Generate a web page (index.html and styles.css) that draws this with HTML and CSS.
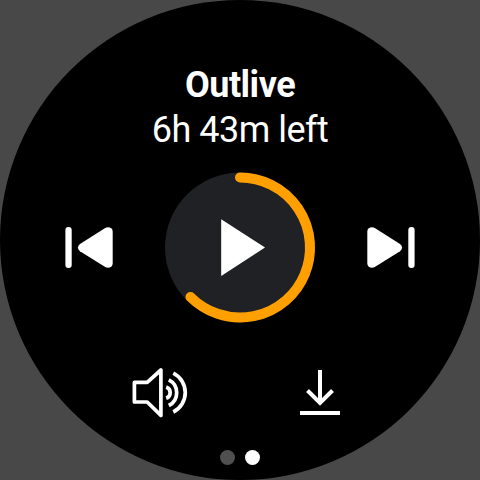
FILE: index.html
```
<!DOCTYPE html>
<html lang="en">
<head>
<meta charset="utf-8">
<title>Player</title>
<link rel="stylesheet" href="styles.css">
</head>
<body>
<main class="watch">
  <header class="info">
    <h1 class="title">Outlive</h1>
    <p class="remaining">6h 43m left</p>
  </header>
  <section class="transport">
    <svg class="skip" viewBox="0 0 48 41">
      <rect x="0.4" y="0.1" width="6.3" height="40.8" rx="3"/>
      <path d="M40.2 1.1 L15 17 Q10.8 20.6 15 24.2 L40.2 40 Q43.5 41.8 46.5 39.4 Q47.7 38.3 47.7 36.3 V4.7 Q47.7 2.7 46.5 1.6 Q43.5 -0.7 40.2 1.1Z"/>
    </svg>
    <svg class="play" viewBox="0 -0.5 150 151">
      <circle class="disc" cx="75" cy="75" r="75"/>
      <path class="progress" d="M75 5 A70 70 0 1 1 25.5 124.5"/>
      <path class="triangle" d="M56.2 46.8 L100 75 L56.2 103.5Z"/>
    </svg>
    <svg class="skip next" viewBox="0 0 48 41">
      <rect x="0.4" y="0.1" width="6.3" height="40.8" rx="3"/>
      <path d="M40.2 1.1 L15 17 Q10.8 20.6 15 24.2 L40.2 40 Q43.5 41.8 46.5 39.4 Q47.7 38.3 47.7 36.3 V4.7 Q47.7 2.7 46.5 1.6 Q43.5 -0.7 40.2 1.1Z"/>
    </svg>
  </section>
  <nav class="actions">
    <svg class="volume" viewBox="0 0 56 50">
      <path class="speaker" d="M2.4 14.3 H15.2 L28.9 2 V47.4 L15.2 34 H2.4Z"/>
      <path d="M34.2 19 A6 6 0 0 1 34.2 30.3"/>
      <path d="M36.8 11.8 A14.4 14.4 0 0 1 36.8 37.5"/>
      <path d="M41.3 5.2 A21.7 21.7 0 0 1 41.3 44"/>
    </svg>
    <svg class="download" viewBox="0 0 40 46">
      <path d="M20 0 V33 M7.5 20.5 L20 33 L32.5 20.5 M0 43 H40"/>
    </svg>
  </nav>
  <div class="pages">
    <span class="dot"></span>
    <span class="dot current"></span>
  </div>
</main>
</body>
</html>
```
FILE: styles.css
```
* { box-sizing: border-box; }

body {
  margin: 0;
  background: #484848;
  color: #fff;
  font-family: Roboto, "Liberation Sans", sans-serif;
}

.watch {
  display: flex;
  flex-direction: column;
  align-items: center;
  width: 480px;
  height: 480px;
  padding-top: 63px;
  border-radius: 50%;
  background: #000;
}

svg { display: block; fill: none; overflow: visible; }

.info { text-align: center; }

.title, .remaining {
  margin: 0;
  font-size: 36px;
  line-height: 45px;
  letter-spacing: -0.5px;
}

.title { font-weight: 700; }
.remaining { font-weight: 400; }

.transport {
  display: flex;
  align-items: center;
  justify-content: space-between;
  width: 350px;
  margin-top: 19px;
}

.skip { width: 48px; height: 41px; fill: #fff; }
.next { transform: scaleX(-1); }
.play { width: 150px; height: 151px; }
.disc { fill: #202125; }
.progress { stroke: #ffa000; stroke-width: 10; stroke-linecap: round; }
.triangle { fill: #fff; }

.actions {
  display: flex;
  align-items: flex-start;
  justify-content: space-between;
  width: 208px;
  height: 50px;
  margin: 45px 8px 0 0;
}

.volume {
  width: 56px;
  height: 50px;
  stroke: #fff;
  stroke-width: 3.7;
}

.speaker { stroke-linejoin: round; }

.download {
  width: 40px;
  height: 46px;
  margin-top: 2px;
  stroke: #fff;
  stroke-width: 4;
}

.pages { display: flex; gap: 10px; margin-top: 32px; }

.dot {
  width: 15px;
  height: 15px;
  border-radius: 50%;
  background: #505050;
}

.current { background: #fff; }
```
